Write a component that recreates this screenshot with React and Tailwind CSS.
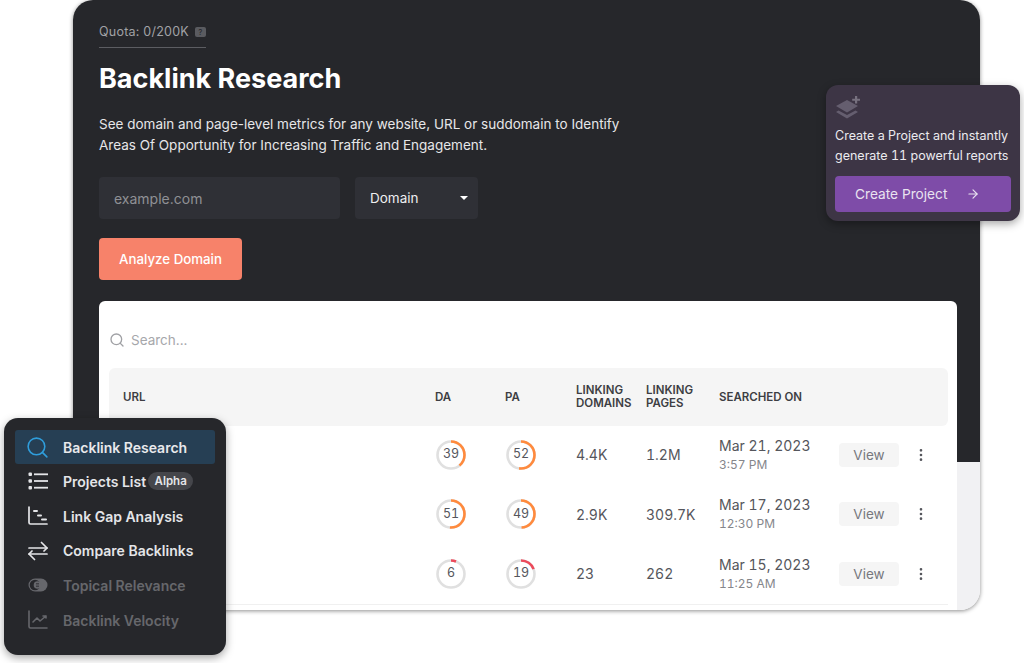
import React from "react";
import { Search, ArrowRight, MoreVertical } from "lucide-react";

function Ring({ value, color }) {
  const r = 13.5;
  const c = 2 * Math.PI * r;
  const len = (value / 100) * c;
  return (
    <div className="relative ml-[1px] w-[30px] h-[30px] flex items-center justify-center">
      <svg width="30" height="30" viewBox="0 0 30 30" className="absolute inset-0">
        <circle cx="15" cy="15" r={r} fill="none" stroke="#e0e0e0" strokeWidth="2.6" />
        <circle cx="15" cy="15" r={r} fill="none" stroke={color} strokeWidth="2.6" strokeDasharray={`${len} ${c}`} transform="rotate(-90 15 15)" />
      </svg>
      <span className="relative text-[12.5px] text-[#55565c]">{value}</span>
    </div>
  );
}

const rows = [
  { da: 39, pa: 52, dc: "#ff8a3d", pc: "#ff8a3d", ld: "4.4K", lp: "1.2M", date: "Mar 21, 2023", time: "3:57 PM" },
  { da: 51, pa: 49, dc: "#ff8a3d", pc: "#ff8a3d", ld: "2.9K", lp: "309.7K", date: "Mar 17, 2023", time: "12:30 PM" },
  { da: 6, pa: 19, dc: "#ec4a5b", pc: "#ec4a5b", ld: "23", lp: "262", date: "Mar 15, 2023", time: "11:25 AM" },
];

const gridCols = "grid grid-cols-[312px_70px_71px_70px_73px_120px_60px_1fr] items-center";

function GapIcon({ c }) {
  return (
    <svg width="20" height="20" viewBox="0 0 20 20" fill="none" stroke={c} strokeWidth="1.7" strokeLinecap="round">
      <path d="M1 1v15.500a1.500 1.500 0 0 0 1.500 1.500H19" />
      <path d="M6 5h3M10 9.500h3M14 13.500h4" strokeWidth="2" />
    </svg>
  );
}
function SwapIcon({ c }) {
  return (
    <svg width="20" height="20" viewBox="0 0 20 20" fill="none" stroke={c} strokeWidth="1.7" strokeLinecap="round" strokeLinejoin="round">
      <path d="M1 7h18" />
      <path d="M13.500 1.500L19 7l-3 3" />
      <path d="M19 13H1" />
      <path d="M6.500 18.500L1 13l3-3" />
    </svg>
  );
}
function ListIcon({ c }) {
  return (
    <svg width="20" height="20" viewBox="0 0 20 20" fill={c}>
      <rect x="0.500" y="1.500" width="3.500" height="3.500" rx="1" />
      <rect x="0.500" y="8.200" width="3.500" height="3.500" rx="1" />
      <rect x="0.500" y="15" width="3.500" height="3.500" rx="1" />
      <rect x="6" y="2.400" width="14" height="1.800" /><rect x="6" y="9.100" width="14" height="1.800" /><rect x="6" y="15.800" width="14" height="1.800" />
    </svg>
  );
}
function ToggleIcon({ c }) {
  return (
    <svg width="20" height="20" viewBox="0 0 20 20" fill="none">
      <rect x="0.500" y="3.500" width="19" height="13" rx="6.500" fill={c} />
      <circle cx="7" cy="10" r="5.300" fill="#26272b" />
      <circle cx="9.500" cy="10" r="3.800" fill={c} />
      <path d="M8 8.500h3M8 10h3M8 11.500h3" stroke="#26272b" strokeWidth="0.600" />
    </svg>
  );
}
function ChartIcon({ c }) {
  return (
    <svg width="20" height="20" viewBox="0 0 20 20" fill="none" stroke={c} strokeWidth="1.600" strokeLinecap="round" strokeLinejoin="round">
      <path d="M1 1v15.500a1.500 1.500 0 0 0 1.500 1.500H19" />
      <path d="M5 12l4-4 3 3 6-5M15 6h3v2" />
    </svg>
  );
}
function StackIcon() {
  return (
    <svg width="26" height="26" viewBox="0 0 26 26" fill="#655e6f">
      <path d="M12 5l11 6-11 6.500L1 11z" />
      <path d="M3.500 15.600L12 20l8.500-4.400 2.500 1.400L12 23.500 1 17z" />
      <path d="M20 1h2.200v2.700H25v2.100h-2.800v2.700H20V5.800h-2.800V3.700H20z" fill="#77717f" />
    </svg>
  );
}

const nav = [
  { label: "Projects List", Icon: ListIcon, badge: true },
  { label: "Link Gap Analysis", Icon: GapIcon },
  { label: "Compare Backlinks", Icon: SwapIcon },
  { label: "Topical Relevance", Icon: ToggleIcon, dim: true },
  { label: "Backlink Velocity", Icon: ChartIcon, dim: true },
];

export default function App() {
  return (
    <div className="relative w-[1024px] h-[663px] overflow-hidden bg-white font-['Inter',sans-serif]">
      <div className="ml-[73px] w-[907px] h-[610px] rounded-[20px] overflow-hidden shadow-[0_1px_4px_rgba(0,0,0,0.45)] bg-[linear-gradient(#26272b_462px,#f1f1f3_462px)] pl-[26px] pr-[23px] pt-[21px]">
        <div className="w-[107px] h-[27px] border-b border-[#5c5d62] flex items-start gap-[6px] text-[12.5px] leading-[21px] text-[#a1a2a6] tracking-[0.23px]">
          <span className="whitespace-nowrap">Quota: 0/200K</span>
          <span className="mt-[6px] w-[11px] h-[10px] rounded-[2px] bg-[#5a5b60] text-[8px] leading-[10px] text-center text-[#26272b]">?</span>
        </div>
        <h1 className="mt-[14px] text-[27px] leading-[34px] font-bold text-white">Backlink Research</h1>
        <p className="mt-[18px] w-[540px] text-[13.5px] leading-[21px] text-[#e6e6e8]">
          See domain and page-level metrics for any website, URL or suddomain to Identify Areas Of Opportunity for Increasing Traffic and Engagement.
        </p>
        <div className="mt-[21px] flex gap-[15px]">
          <div className="w-[241px] h-[42px] rounded-[4px] bg-[#2f3036] flex items-center pl-[15px] text-[14px] text-[#8f9095]">example.com</div>
          <div className="w-[123px] h-[42px] rounded-[4px] bg-[#2f3036] flex items-center justify-between pl-[15px] pr-[10px] text-[13.500px] text-[#eeeef0]">
            <span>Domain</span>
            <span className="w-0 h-0 border-x-[4px] border-x-transparent border-t-[4px] border-t-white" />
          </div>
        </div>
        <button className="mt-[19px] block w-[143px] h-[42px] pt-[1px] rounded-[4px] bg-[#f7826a] text-white text-[13.300px] font-medium">Analyze Domain</button>
        <div className="mt-[21px] w-[858px] h-[320px] rounded-t-[6px] bg-white pl-[10px] pr-[9px]">
          <div className="h-[67px] flex items-center gap-[6px] pt-[11px] text-[13.500px] text-[#a6a7ab]">
            <Search size={16} color="#a0a1a5" strokeWidth={2} />
            <span>Search...</span>
          </div>
          <div className={`${gridCols} h-[58px] rounded-[6px] bg-[#f5f5f5] pl-[14px] text-[11.500px] leading-[13.500px] font-semibold text-[#3d3e43]`}>
            <div className="pt-[1px]">URL</div>
            <div className="pt-[1px]">DA</div>
            <div className="pt-[1px]">PA</div>
            <div>LINKING<br />DOMAINS</div>
            <div>LINKING<br />PAGES</div>
            <div className="pt-[1px]">SEARCHED ON</div>
          </div>
          <div className="-mt-px tabular-nums">
            {rows.map((r) => (
              <div key={r.date} className={`${gridCols} h-[59.500px] pl-[14px] text-[#55565c]`}>
                <div />
                <div><Ring value={r.da} color={r.dc} /></div>
                <div><Ring value={r.pa} color={r.pc} /></div>
                <div className="text-[14px]">{r.ld}</div>
                <div className="text-[14px]">{r.lp}</div>
                <div>
                  <div className="text-[14px] leading-[19px]">{r.date}</div>
                  <div className="text-[12px] leading-[19px] text-[#85868b]">{r.time}</div>
                </div>
                <div className="h-[24px] rounded-[4px] bg-[#f5f5f5] flex items-center justify-center text-[13.500px] text-[#77787d]">View</div>
                <div className="pl-[14px]"><MoreVertical size={16} color="#55565c" strokeWidth={2} /></div>
              </div>
            ))}
          </div>
          <div className="border-t border-[#f0f0f0]" />
        </div>
      </div>

      <div className="absolute left-[826px] top-[85px] w-[194px] h-[136px] rounded-[12px] bg-[#3d3545] shadow-[0_3px_8px_rgba(0,0,0,0.35)] px-[9px] pt-[10px]">
        <StackIcon />
        <p className="mt-[5px] text-[12.500px] leading-[20px] text-[#ecebef] whitespace-nowrap tabular-nums">Create a Project and instantly<br />generate 11 powerful reports</p>
        <div className="mt-[10px] h-[36px] rounded-[4px] bg-[#7e4ca8] flex items-center pl-[20px] gap-[19px] text-[13.700px] text-[#e9e3f0]">
          <span>Create Project</span>
          <ArrowRight size={14} color="#e9e3f0" />
        </div>
      </div>

      <div className="absolute left-[4px] top-[418px] w-[222px] h-[237px] rounded-[14px] bg-[#26272b] shadow-[0_3px_8px_rgba(0,0,0,0.35)] px-[11px] pt-[12px]">
        <div className="h-[34px] rounded-[3px] bg-[#263f54] flex items-center pl-[10px] gap-[13px] text-[14px] font-semibold text-[#e8e9ec]">
          <Search size={25} color="#2f9ddb" strokeWidth={1.5} />
          <span>Backlink Research</span>
        </div>
        {nav.map(({ label, Icon, badge, dim }) => {
          const c = dim ? "#66676c" : "#e4e5e8";
          return (
            <div key={label} className={`h-[34.700px] flex items-center pl-[13px] gap-[15px] text-[14px] font-semibold ${dim ? "text-[#66676c]" : "text-[#e4e5e8]"}`}>
              <Icon c={c} />
              <span className="whitespace-nowrap">{label}</span>
              {badge && <span className="-ml-[13px] h-[18px] w-[45px] rounded-full bg-[#45464b] text-[11.500px] leading-[18px] text-center font-semibold">Alpha</span>}
            </div>
          );
        })}
      </div>
    </div>
  );
}
